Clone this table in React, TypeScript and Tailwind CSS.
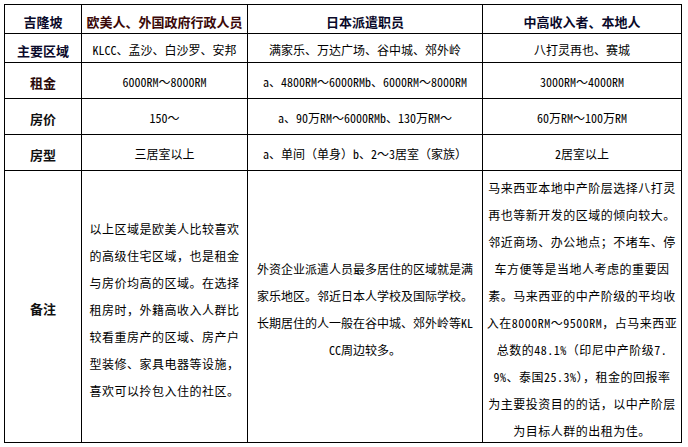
import React from "react";

const FONT = '"Noto Sans Mono CJK SC", "Noto Sans CJK SC", sans-serif';

function Head({ children, color = "text-[#111]", pt = "pt-[3px]" }: { children: React.ReactNode; color?: string; pt?: string }) {
  return (
    <div className={`bg-white flex items-center justify-center text-[13px] font-bold leading-none ${color} ${pt}`}>
      {children}
    </div>
  );
}

function Cell({ children, pt = "pt-[3px]" }: { children: React.ReactNode; pt?: string }) {
  return (
    <div className={`bg-white flex items-center justify-center text-[12px] leading-none text-black whitespace-nowrap ${pt}`}>
      {children}
    </div>
  );
}

function Lines({ lines, tracking }: { lines: string[]; tracking: string }) {
  return (
    <div className={`bg-white flex flex-col items-center justify-center text-[12px] leading-[27px] text-black pt-[5px] ${tracking}`}>
      {lines.map((l, i) => (
        <div key={i} className="whitespace-nowrap text-center">
          {l}
        </div>
      ))}
    </div>
  );
}

export default function App() {
  const col2 = [
    "以上区域是欧美人比较喜欢",
    "的高级住宅区域，也是租金",
    "与房价均高的区域。在选择",
    "租房时，外籍高收入人群比",
    "较看重房产的区域、房产户",
    "型装修、家具电器等设施，",
    "喜欢可以拎包入住的社区。",
  ];
  const col3 = [
    "外资企业派遣人员最多居住的区域就是满",
    "家乐地区。邻近日本人学校及国际学校。",
    "长期居住的人一般在谷中城、郊外岭等KL",
    "CC周边较多。",
  ];
  const col4 = [
    "马来西亚本地中产阶层选择八打灵",
    "再也等新开发的区域的倾向较大。",
    "邻近商场、办公地点；不堵车、停",
    "车方便等是当地人考虑的重要因",
    "素。马来西亚的中产阶级的平均收",
    "入在8000RM～9500RM，占马来西亚",
    "总数的48.1%（印尼中产阶级7.",
    "9%、泰国25.3%），租金的回报率",
    "为主要投资目的的话，以中产阶层",
    "为目标人群的出租为佳。",
  ];
  return (
    <div className="w-[688px] h-[447px] bg-white pt-[4px] pl-[4px]" style={{ fontFamily: FONT }}>
      <div className="w-[678px] h-[439px] bg-black p-px grid gap-px grid-cols-[76px_165px_234px_198px] grid-rows-[28px_28px_35px_35px_35px_271px]">
        <Head color="text-[#0a0a2a]" pt="pt-[4px]">吉隆坡</Head>
        <Head color="text-[#3a0808]" pt="pt-[4px]">欧美人、外国政府行政人员</Head>
        <Head color="text-[#0a0a2a]" pt="pt-[4px]">日本派遣职员</Head>
        <Head color="text-[#0a0a2a]" pt="pt-[4px]">中高收入者、本地人</Head>

        <Head color="text-[#0a0a2a]" pt="pt-[4px]">主要区域</Head>
        <Cell pt="pt-[4px]">KLCC、孟沙、白沙罗、安邦</Cell>
        <Cell pt="pt-[4px]">满家乐、万达广场、谷中城、郊外岭</Cell>
        <Cell pt="pt-[4px]">八打灵再也、赛城</Cell>

        <Head color="text-[#2a0a0a]">租金</Head>
        <Cell>6000RM～8000RM</Cell>
        <Cell>a、4800RM～6000RMb、6000RM～8000RM</Cell>
        <Cell>3000RM～4000RM</Cell>

        <Head>房价</Head>
        <Cell>150～</Cell>
        <Cell>a、90万RM～6000RMb、130万RM～</Cell>
        <Cell>60万RM～100万RM</Cell>

        <Head>房型</Head>
        <Cell>三居室以上</Cell>
        <Cell>a、单间（单身）b、2～3居室（家族）</Cell>
        <Cell>2居室以上</Cell>

        <Head>备注</Head>
        <Lines lines={col2} tracking="tracking-[0.5px]" />
        <Lines lines={col3} tracking="tracking-normal" />
        <Lines lines={col4} tracking="tracking-[0.5px]" />
      </div>
    </div>
  );
}
